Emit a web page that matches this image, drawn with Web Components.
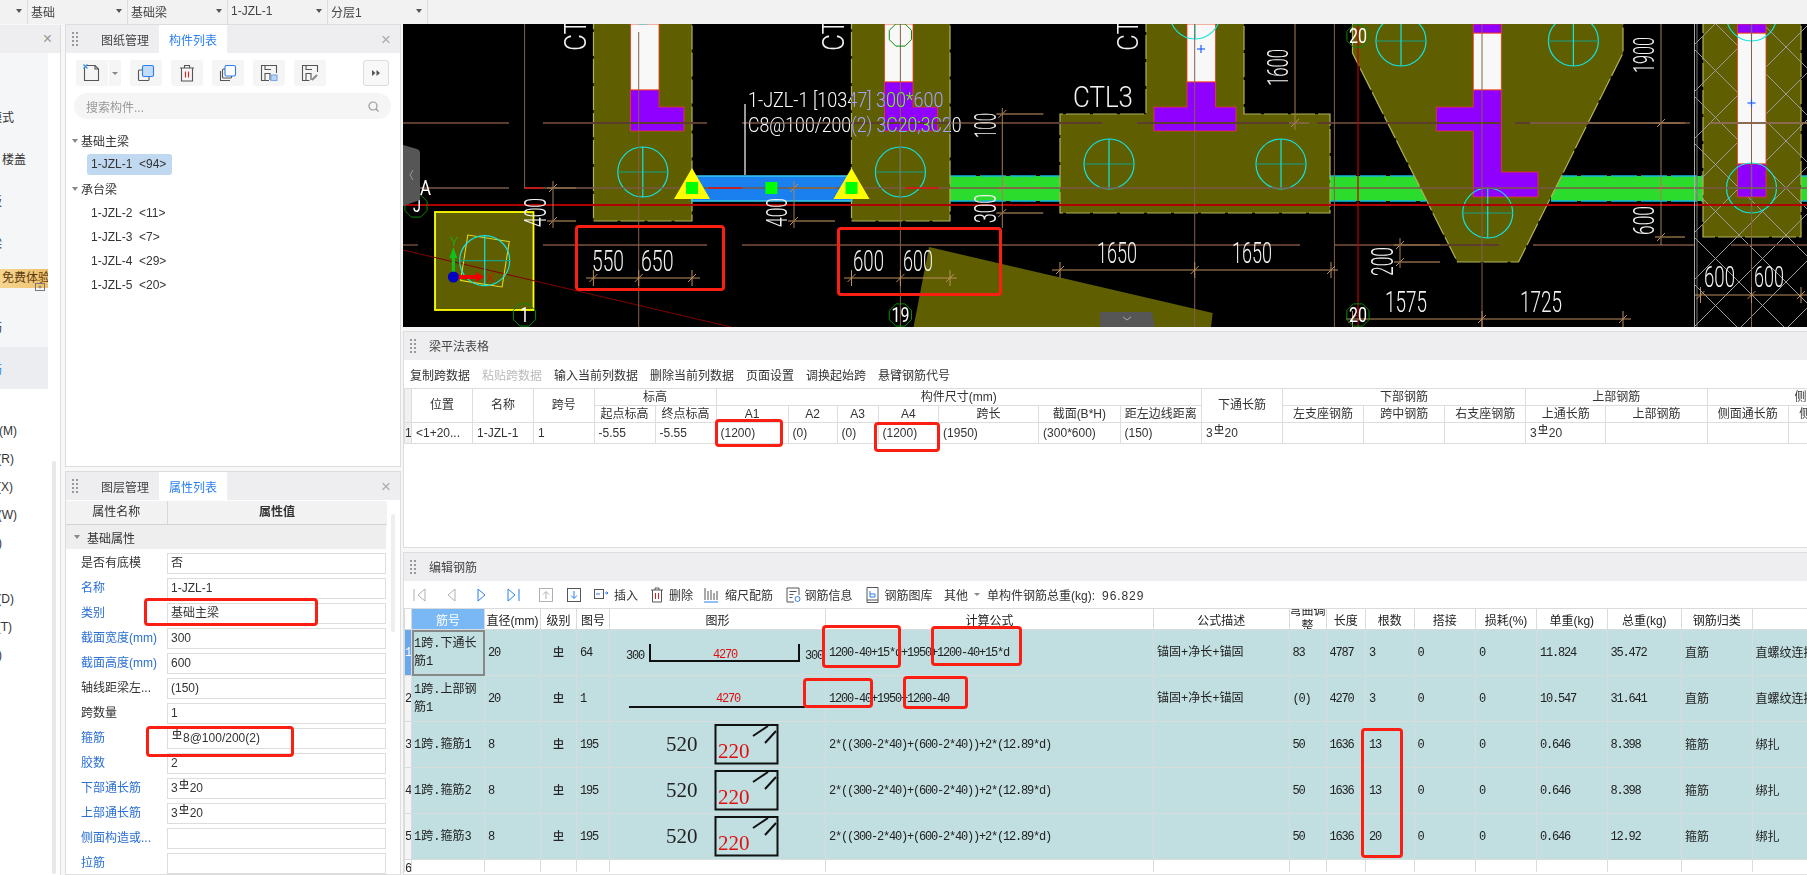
<!DOCTYPE html>
<html lang="zh-CN">
<head>
<meta charset="utf-8">
<title>编辑钢筋</title>
<style>
  html, body { margin: 0; height: 100%; overflow: hidden; background: #f7f7f7; }
  body { font: 12px "Liberation Sans", "Noto Sans CJK SC", sans-serif; color: #333; }
</style>
</head>
<body>
<app-shell>
  <top-bar slot="top"></top-bar>
  <nav-rail slot="rail"></nav-rail>
  <dock-panel slot="list" tabs="图纸管理,构件列表" active="1"><comp-list></comp-list></dock-panel>
  <dock-panel slot="props" tabs="图层管理,属性列表" active="1"><prop-list></prop-list></dock-panel>
  <cad-canvas slot="canvas"></cad-canvas>
  <dock-panel slot="beam" heading="梁平法表格"><beam-table></beam-table></dock-panel>
  <dock-panel slot="rebar" heading="编辑钢筋"><rebar-table></rebar-table></dock-panel>

  <red-mark slot="marks" x="575" y="225" w="150" h="66"></red-mark>
  <red-mark slot="marks" x="837" y="227" w="165" h="69"></red-mark>
  <red-mark slot="marks" x="144" y="598" w="174" h="28"></red-mark>
  <red-mark slot="marks" x="146" y="726" w="148" h="31"></red-mark>
  <red-mark slot="marks" x="715" y="419" w="68" h="28"></red-mark>
  <red-mark slot="marks" x="874" y="422" w="66" h="30"></red-mark>
  <red-mark slot="marks" x="822" y="625" w="79" h="43"></red-mark>
  <red-mark slot="marks" x="931" y="626" w="91" h="40"></red-mark>
  <red-mark slot="marks" x="803" y="678" w="70" h="30"></red-mark>
  <red-mark slot="marks" x="903" y="676" w="65" h="33"></red-mark>
  <red-mark slot="marks" x="1361" y="728" w="42" h="130"></red-mark>
</app-shell>

<script>
// rebar grade symbol, used all over the tables
function barMark(size, lift) {
  var s = size || 10;
  var up = lift === undefined ? 3 : lift;
  return `<svg width="${s}" height="${s + 1}" viewBox="0 0 10 11" style="vertical-align:-1px;position:relative;top:-${up}px;margin:0 1px" fill="none" stroke="currentColor" stroke-width="1"><path d="M1.5 2.5h7v3.5h-7zM5 0v9.5M.5 9.5h9"/></svg>`;
}

class AppShell extends HTMLElement {
  constructor() {
    super();
    this.attachShadow({ mode: 'open' });
    this.shadowRoot.innerHTML = `
      <style>
        :host { display: block; position: relative; width: 1807px; height: 875px; overflow: hidden; }
        .grid {
          display: grid;
          height: 875px;
          grid-template-columns: 65px 338px 1404px;
          grid-template-rows: 24px 443px 408px;
        }
        .top { grid-column: 1 / 4; }
        .rail { grid-row: 2 / 4; width: 61px; }
        .list { grid-column: 2; grid-row: 2; min-height: 0; width: 336px; }
        .props { grid-column: 2; grid-row: 3; margin-top: 4px; min-height: 0; width: 336px; }
        .right {
          grid-column: 3; grid-row: 2 / 4;
          display: grid;
          grid-template-rows: 303px 217px 323px;
          row-gap: 4px;
          min-height: 0;
        }
        .marks { position: absolute; inset: 0; pointer-events: none; }
      </style>
      <div class="grid">
        <div class="top"><slot name="top"></slot></div>
        <div class="rail"><slot name="rail"></slot></div>
        <div class="list"><slot name="list"></slot></div>
        <div class="props"><slot name="props"></slot></div>
        <div class="right">
          <slot name="canvas"></slot>
          <slot name="beam"></slot>
          <slot name="rebar"></slot>
        </div>
      </div>
      <div class="marks"><slot name="marks"></slot></div>
    `;
  }
}

class RedMark extends HTMLElement {
  constructor() {
    super();
    this.attachShadow({ mode: 'open' });
    this.shadowRoot.innerHTML = `<style>
      :host { display: block; position: absolute; box-sizing: border-box; border: 3px solid #fb1e12; border-radius: 4px; }
    </style>`;
  }
  connectedCallback() {
    this.style.left = this.getAttribute('x') + 'px';
    this.style.top = this.getAttribute('y') + 'px';
    this.style.width = this.getAttribute('w') + 'px';
    this.style.height = this.getAttribute('h') + 'px';
  }
}

class TopBar extends HTMLElement {
  constructor() {
    super();
    this.attachShadow({ mode: 'open' });
    var combo = (label, w) => `<div class="combo" style="width:${w}px"><span>${label}</span><i></i></div>`;
    this.shadowRoot.innerHTML = `
      <style>
        :host { display: block; height: 24px; background: #f2f2f2; }
        .bar { display: flex; height: 24px; }
        .combo {
          box-sizing: border-box; display: flex; align-items: center; justify-content: space-between;
          padding: 0 5px 2px 3px; border-right: 1px solid #dcdcdc; color: #444;
        }
        i { margin-left: auto; width: 0; height: 0; border: 3px solid transparent; border-top: 4px solid #555; border-bottom: 0; }
      </style>
      <div class="bar">
        ${combo('', 28)}${combo('基础', 100)}${combo('基础梁', 100)}${combo('1-JZL-1', 100)}${combo('分层1', 100)}
      </div>`;
  }
}

class NavRail extends HTMLElement {
  constructor() {
    super();
    this.attachShadow({ mode: 'open' });
    var row = (h, text, end, cls) => `<div class="row ${cls || ''}" style="height:${h}px;padding-right:${48 - end}px"><span>${text}</span></div>`;
    this.shadowRoot.innerHTML = `
      <style>
        :host { display: block; position: relative; height: 851px; background: #fff; border-right: 1px solid #ddd; box-sizing: border-box; }
        .head { display: flex; justify-content: flex-end; align-items: center; height: 28px; margin-top: 1px; padding-right: 8px; background: #eeeef0; color: #999; font-size: 16px; }
        .row { box-sizing: border-box; width: 48px; display: flex; justify-content: flex-end; align-items: center; overflow: hidden; white-space: nowrap; color: #333; }
        .group { background: #f5f6f8; width: 48px; }
        .sel { background: #ecedf1; color: #2a7ff0; }
        .pad { height: 28px; }
        .tail { margin-top: 364px; }
        .tag {
          position: absolute; left: 0; top: 244px; width: 48px; height: 19px; padding-left: 2px; box-sizing: border-box;
          background: linear-gradient(90deg, #f6d592, #efc06c); color: #5c3d10; line-height: 19px; white-space: nowrap; overflow: hidden;
        }
        .lock { position: absolute; left: 35px; top: 256px; }
        .thumb { position: absolute; left: 52px; top: 436px; bottom: 2px; width: 4px; border-radius: 2px; background: #e8e8e8; }
      </style>
      <div class="head">×</div>
      <div class="group">
        ${row(42, '')}${row(42, '模式', 14)}${row(42, '楼盖', 26)}${row(42, '板', 2)}${row(42, '梁', 2)}${row(42, '')}${row(42, '筋', 2)}
        ${row(42, '配筋', 2, 'sel')}
      </div>
      <div class="pad"></div>
      ${row(28, '(M)', 17)}${row(28, '(R)', 14)}${row(28, '(X)', 13)}${row(28, '(W)', 17)}${row(28, '(A)', 2)}${row(28, '')}${row(28, '(D)', 14)}${row(28, '(T)', 12)}${row(28, '(C)', 2)}
      <div class="group tail">
        ${row(42, '量', 2)}${row(42, '定义', 14)}
      </div>
      <div class="tag">免费体验</div>
      <svg class="lock" width="10" height="10" viewBox="0 0 10 10" fill="none" stroke="#777"><rect x=".5" y="2.5" width="9" height="7"/><circle cx="5" cy="6" r="1"/></svg>
      <div class="thumb"></div>
    `;
  }
}

class DockPanel extends HTMLElement {
  constructor() {
    super();
    this.attachShadow({ mode: 'open' });
  }
  connectedCallback() {
    var tabs = (this.getAttribute('tabs') || '').split(',').filter(Boolean);
    var active = Number(this.getAttribute('active') || 0);
    var heading = this.getAttribute('heading') || '';
    var dots = '';
    for (var i = 0; i < 4; i++) dots += `<rect x="0" y="${i * 4}" width="2" height="2"/><rect x="4" y="${i * 4}" width="2" height="2"/>`;
    var tabHtml = tabs.map((t, i) => `<div class="tab ${i === active ? 'on' : ''}">${t}</div>`).join('');
    this.shadowRoot.innerHTML = `
      <style>
        :host { display: flex; flex-direction: column; box-sizing: border-box; height: 100%; min-height: 0; background: #fff; border: 1px solid #ddd; }
        .head { flex: none; display: flex; align-items: stretch; height: 28px; background: #eeeef0; color: #444; }
        .grip { flex: none; align-self: center; fill: #999; margin: 0 0 0 6px; }
        .tab { padding: 0 10px; display: flex; align-items: center; }
        .tab:first-of-type { margin-left: 13px; }
        .on { background: #fff; color: #2a7ff0; }
        .title { margin: -2px 0 0 13px; align-self: center; }
        .x { margin-left: auto; padding-right: 9px; align-self: center; color: #aaa; font-size: 17px; line-height: 1; }
        .body { flex: 1; min-height: 0; overflow: hidden; }
      </style>
      <div class="head">
        <svg class="grip" width="6" height="14" viewBox="0 0 6 14">${dots}</svg>
        ${heading ? `<div class="title">${heading}</div>` : tabHtml + '<div class="x">×</div>'}
      </div>
      <div class="body"><slot></slot></div>`;
  }
}

class CompList extends HTMLElement {
  constructor() {
    super();
    this.attachShadow({ mode: 'open' });
    var ic = (body) => `<svg width="18" height="18" viewBox="0 0 18 18" fill="none" stroke="#555" stroke-width="1.1">${body}</svg>`;
    var icons = [
      '<path d="M1.5 4v12.5h14V5l-3.5-3.5H4"/><path d="M12 1.5V5h3.5"/><path d="M.5.5l4 4M4.5.5l-4 4" stroke="#3a86e8"/>',
      '<rect x="1.5" y="6" width="10.5" height="10.5" rx="1"/><rect x="5.5" y="1.5" width="11" height="11" rx="1.5" fill="#c4dcfb" stroke="#2a7ff0"/>',
      '<path d="M2 4h14M6.5 4V1.5h5V4M3.5 4v13h11V4"/><path d="M7.5 7.5v6M10.5 7.5v6" stroke="#e0201a"/>',
      '<path d="M1.5 7v9.5h9.5"/><rect x="3.5" y="5" width="9" height="9" rx="1"/><rect x="6" y="1.5" width="10.5" height="10.5" rx="1.5" fill="#fff" stroke="#2a7ff0"/>',
      '<path d="M16.5 9V1.5h-15v15h7.5"/><path d="M5 16V9.5h5V16M5 1.5v4h6"/><rect x="11" y="11" width="6" height="5.5" fill="#b8d6fa" stroke="#7aa8e0"/>',
      '<path d="M16.5 8V1.5h-15v15h7"/><path d="M5 16V9.5h5V16M5 1.5v4h6"/><path d="M11 16l5-5" stroke="#888" stroke-width="2"/>'
    ];
    var tree = [
      ['g', '基础主梁'], ['s', '1-JZL-1 &nbsp;&lt;94&gt;'],
      ['g', '承台梁'], ['i', '1-JZL-2 &nbsp;&lt;11&gt;'], ['i', '1-JZL-3 &nbsp;&lt;7&gt;'], ['i', '1-JZL-4 &nbsp;&lt;29&gt;'], ['i', '1-JZL-5 &nbsp;&lt;20&gt;']
    ];
    this.shadowRoot.innerHTML = `
      <style>
        :host { display: block; }
        .tools { display: flex; padding: 7px 0 0 10px; height: 26px; }
        .btn { width: 32px; height: 26px; background: #f5f5f5; border-radius: 3px; display: flex; align-items: center; justify-content: center; margin-right: 9px; }
        .btn.first { margin-right: 0; border-radius: 3px 0 0 3px; }
        .drop { width: 12px; height: 26px; margin: 0 9px 0 1px; background: #f5f5f5; border-radius: 0 3px 3px 0; display: flex; align-items: center; justify-content: center; }
        .drop i { border: 3px solid transparent; border-top: 3px solid #888; border-bottom: 0; }
        .more { box-sizing: border-box; width: 26px; height: 26px; margin-left: 28px; background: #f8f8f8; border: 1px solid #ddd; border-radius: 3px; display: flex; align-items: center; justify-content: center; }
        .search { display: flex; align-items: center; justify-content: space-between; height: 26px; margin: 7px 9px 0 8px; padding: 0 12px; background: #f5f5f5; border-radius: 13px; color: #999; }
        .tree { margin-top: 9.5px; }
        .node { height: 24px; display: flex; align-items: center; color: #333; }
        .g { padding-left: 6px; }
        .g i { width: 0; border: 3px solid transparent; border-top: 4px solid #888; border-bottom: 0; margin-right: 3px; }
        .i { padding-left: 25px; }
        .s { padding-left: 21px; }
        .s span { box-sizing: border-box; width: 85px; height: 21px; line-height: 21px; padding-left: 4px; background: #c0d8f0; border-radius: 3px; }
      </style>
      <div class="tools">
        <div class="btn first">${ic(icons[0])}</div><div class="drop"><i></i></div>
        ${icons.slice(1).map(b => `<div class="btn">${ic(b)}</div>`).join('')}
        <div class="more"><svg width="8" height="6" viewBox="0 0 8 6" fill="#555"><path d="M0 0l3.5 3L0 6zM4.500 0l3.500 3-3.500 3z"/></svg></div>
      </div>
      <div class="search"><span>搜索构件...</span>
        <svg width="11" height="11" viewBox="0 0 11 11" fill="none" stroke="#999" stroke-width="1.2"><circle cx="5" cy="5" r="4"/><path d="M8 8l2.500 2.500"/></svg></div>
      <div class="tree">
        ${tree.map(n => n[0] === 'g'
          ? `<div class="node g"><i></i>${n[1]}</div>`
          : n[0] === 's' ? `<div class="node s"><span>${n[1]}</span></div>` : `<div class="node i">${n[1]}</div>`).join('')}
      </div>`;
  }
}

class PropList extends HTMLElement {
  constructor() {
    super();
    this.attachShadow({ mode: 'open' });
    var rows = [
      ['是否有底模', '否', 0], ['名称', '1-JZL-1', 1], ['类别', '基础主梁', 1], ['截面宽度(mm)', '300', 1],
      ['截面高度(mm)', '600', 1], ['轴线距梁左...', '(150)', 0], ['跨数量', '1', 0],
      ['箍筋', barMark(10) + '8@100/200(2)', 1], ['胶数', '2', 1], ['下部通长筋', '3' + barMark(10) + '20', 1],
      ['上部通长筋', '3' + barMark(10) + '20', 1], ['侧面构造或...', '', 1], ['拉筋', '', 1]
    ];
    this.shadowRoot.innerHTML = `
      <style>
        :host { display: block; position: relative; }
        .head { display: grid; grid-template-columns: 100.500px 220px; height: 24px; margin-top: 1px; line-height: 23px; text-align: center; background: #f2f2f2; border-bottom: 1px solid #d4d4d4; width: 321px; box-sizing: border-box; }
        .head div + div { border-left: 1px solid #d8d8d8; font-weight: bold; }
        .group { display: flex; align-items: center; height: 24px; padding-left: 8px; width: 320px; box-sizing: border-box; background: #eeeeee; }
        .group i { border: 3px solid transparent; border-top: 4px solid #888; border-bottom: 0; margin-right: 7px; }
        .list { padding-top: 4px; }
        .row { display: grid; grid-template-columns: 101px 219px; height: 25px; align-items: start; }
        .name { padding-left: 15px; line-height: 21px; white-space: nowrap; }
        .name.key { color: #2a6fd6; }
        .val { box-sizing: border-box; height: 21px; border: 1px solid #ddd; padding-left: 3px; line-height: 19px; white-space: nowrap; }
        .thumb { position: absolute; left: 325px; top: 13px; width: 4px; height: 118px; border-radius: 2px; background: #eee; }
      </style>
      <div class="head"><div>属性名称</div><div>属性值</div></div>
      <div class="group"><i></i>基础属性</div>
      <div class="list">
        ${rows.map(r => `<div class="row"><div class="name ${r[2] ? 'key' : ''}">${r[0]}</div><div class="val">${r[1]}</div></div>`).join('')}
      </div>
      <div class="thumb"></div>`;
  }
}

class CadCanvas extends HTMLElement {
  constructor() {
    super();
    this.attachShadow({ mode: 'open' });
  }

  connectedCallback() { this.render(); }

  _line(x1, y1, x2, y2, color, w, dash) {
    return `<line x1="${x1}" y1="${y1}" x2="${x2}" y2="${y2}" stroke="${color}" stroke-width="${w || 1}"${dash ? ` stroke-dasharray="${dash}"` : ''}/>`;
  }

  // horizontal CAD number, given by its box: baseline y, left x, width, cap height
  _num(x, y, w, h, str, fill) {
    var heavy = fill === '#fff' ? ' style="font-weight:400"' : '';
    return `<text x="${x}" y="${y}" font-size="${h / 0.72}" textLength="${w}" lengthAdjust="spacingAndGlyphs" fill="${fill || '#f2f2f2'}"${heavy}>${str}</text>`;
  }

  // number reading upwards, given by its box
  _up(x0, x1, y0, y1, str) {
    return `<text transform="translate(${x1} ${y1}) rotate(-90)" font-size="${(x1 - x0) / 0.72}" textLength="${y1 - y0}" lengthAdjust="spacingAndGlyphs" fill="#f2f2f2">${str}</text>`;
  }

  _pile(cx, cy) {
    var r = 25;
    return `<circle cx="${cx}" cy="${cy}" r="${r}" fill="none" stroke="#12e4e4" stroke-width="1.2"/>` +
      this._line(cx - r, cy, cx + r, cy, '#16a08c', 1.2) + this._line(cx, cy - r, cx, cy + r, '#12e4e4', 1.2);
  }

  _axisMark(cx, cy, label) {
    var r = 12, pts = [];
    for (var i = 0; i < 8; i++) pts.push((cx + r * Math.cos(i * Math.PI / 4 + .39)).toFixed(1) + ',' + (cy + r * Math.sin(i * Math.PI / 4 + .39)).toFixed(1));
    return `<polygon points="${pts.join(' ')}" fill="none" stroke="#0a8a0a"/>` + (label ? this._num(cx - label.length * 4.5, cy + 7, label.length * 9, 14, label, '#fff') : '');
  }

  // dimension line with oblique ticks
  _dimH(x1, x2, y, ticks) {
    var s = this._line(x1, y, x2, y, '#bb8f5e');
    ticks.forEach(t => {
      s += this._line(t - 4, y + 4, t + 4, y - 4, '#bb8f5e') + this._line(t, y - 8, t, y + 8, '#bb8f5e');
    });
    return s;
  }

  _dimV(x, y1, y2, ticks, reach) {
    var s = this._line(x, y1, x, y2, '#a57f56');
    ticks.forEach(t => {
      s += this._line(x - 4, t + 4, x + 4, t - 4, '#bb8f5e') + this._line(x - 6, t, x + (reach || 12), t, '#8a6a48', 1.5);
    });
    return s;
  }

  render() {
    var OLIVE = '#5f5e00', EDGE = '#b2b25a', PURPLE = '#8f00ff', RED = '#f03c14', AXIS = '#5c3d2e';
    var s = '';

    // beams below everything
    [[950, 1060], [1330, 1426], [1551, 1703], [1800, 1807]].forEach(b => {
      s += `<rect x="${b[0]}" y="176" width="${b[1] - b[0]}" height="25" fill="#2cdc2c"/>`;
      s += this._line(b[0], 176, b[1], 176, '#12b8e0', 1.5, '26 4') + this._line(b[0], 201, b[1], 201, '#12b8e0', 1.5, '26 4');
    });

    // caps
    var caps = [
      '593.500,16 692,16 692,221 593.500,221',
      '851.500,16 950,16 950,221 851.500,221',
      '1146,16 1244,16 1244,114 1330,114 1330,213 1060,213 1060,114 1146,114',
      '1352.500,16 1352.500,53 1457.500,262 1518.500,262 1623,53 1623,16',
      '1703,16 1801,16 1801,237 1703,237'
    ];
    caps.forEach(p => { s += `<polygon points="${p}" fill="${OLIVE}" stroke="${EDGE}" stroke-width="1.2" stroke-dasharray="24 3"/>`; });
    s += `<polygon points="929,247 1212.700,313 1210,335 912,335" fill="${OLIVE}"/>`;
    s += `<rect x="435" y="212" width="98.500" height="98" fill="${OLIVE}" stroke="#ffff00" stroke-width="1.800"/>`;

    // crossed hatch over the right hand cap
    s += `<rect x="1695" y="24" width="112" height="303" fill="url(#hatch)"/>`;

    // columns
    var white = [[630.500, 24, 28.500, 66], [884.500, 24, 28.500, 58], [1187, 24, 28.500, 58], [1473.300, 33, 28, 57], [1737.500, 33, 28.500, 131]];
    white.forEach(r => { s += `<rect x="${r[0]}" y="${r[1]}" width="${r[2]}" height="${r[3]}" fill="#f8f8f8" stroke="${RED}" stroke-width=".8"/>`; });
    var purple = [
      '630.500,90 659,90 659,107 684,107 684,131 630.500,131',
      '884.500,82 913,82 913,107 937.500,107 937.500,131 884.500,131',
      '1187,82 1215.500,82 1215.500,107 1236,107 1236,131 1154,131 1154,107 1187,107',
      '1473.300,90 1501.300,90 1501.300,172 1538,172 1538,197 1473.300,197 1473.300,131 1436.300,131 1436.300,107 1473.300,107',
      '1473.300,24 1501.300,24 1501.300,33 1473.300,33',
      '1737.500,164 1766,164 1766,197 1737.500,197',
      '1737.500,24 1766,24 1766,33 1737.500,33'
    ];
    purple.forEach(p => { s += `<polygon points="${p}" fill="${PURPLE}" stroke="${RED}" stroke-width=".8"/>`; });

    // the picked beam
    s += `<rect x="692" y="176" width="159.500" height="25" fill="#1a80f0" stroke="#38c8f0" stroke-width="1.500"/>`;

    // piles
    [[642.800, 172], [900.400, 172], [1109, 164], [1281, 164], [1401, 41], [1573.400, 41], [1487.700, 213], [1751.500, 188], [1195, 14], [1751.500, 16], [642.800, -1]]
      .forEach(c => { s += this._pile(c[0], c[1]); });

    // grid axes
    [[403, 509], [543, 707], [742, 1102], [1137, 1300], [1317, 1500], [1515, 1690]].forEach(a => { s += this._line(a[0], 123, a[1], 123, AXIS, 1.800); });
    s += this._line(1530, 123, 1680, 123, '#7a5a40', 1.800) + this._line(1710, 123, 1807, 123, '#8a6a50', 1.800);
    [[403, 509], [524, 1807]].forEach(a => { s += this._line(a[0], 188, a[1], 188, '#7a5a48', 1.500); });
    s += this._line(524.600, 188, 543, 188, '#e01010', 1.500) + this._line(708, 188, 742, 188, '#e01010', 1.500) + this._line(905, 188, 939, 188, '#e01010', 1.500);
    [[403, 418], [543, 707], [742, 1300], [1334, 1499], [1533, 1695], [1731, 1807]].forEach(a => { s += this._line(a[0], 245, a[1], 245, AXIS, 1.800); });
    s += this._line(403, 205, 1807, 205, '#b00000', 2);
    s += this._line(403, 250, 731, 327, '#800000');
    s += this._line(1358, 24, 1358, 327, '#c00000', 1.200);
    [[524.600, 24, 188], [638.700, 32, 327], [900.400, 24, 327], [1194.700, 24, 327], [1334.400, 24, 327], [1482, 24, 327], [1751.500, 24, 327]].forEach(l => {
      s += this._line(l[0], l[1], l[0], l[2], '#86604a');
    });
    s += this._line(1694.500, 24, 1694.500, 327, '#aaa') + this._line(1697, 24, 1697, 327, '#777');

    // dimensions
    s += this._dimH(586, 700, 278, [593.400, 638.700, 692]);
    s += this._dimH(844, 957, 278, [851.500, 900.400, 950]);
    s += this._dimH(1052, 1338, 270, [1060, 1194.700, 1331]);
    s += this._dimH(1346, 1631, 319, [1352.500, 1482, 1623]);
    s += this._dimH(1695, 1807, 295, [1700.500, 1751.500, 1801]);
    s += this._dimV(553, 181, 228, [188, 221], 23);
    s += this._dimV(794, 181, 228, [188, 221], 41);
    s += this._dimV(1002.300, 108, 228, [114, 188, 213], 41);
    s += this._dimV(1295, 24, 130, [123], 14);
    s += this._dimV(1661, 24, 245, [123, 188, 237], 24);
    s += this._dimV(1400, 238, 268, [245, 262], 40);

    // numbers
    s += this._num(592, 271, 32, 21, '550') + this._num(641, 271, 32.500, 21, '650');
    s += this._num(853, 271, 31, 21, '600') + this._num(903, 271, 30, 21, '600');
    s += this._num(1097, 263, 40, 21, '1650') + this._num(1232, 263, 40, 21, '1650');
    s += this._num(1385, 312, 42, 21, '1575') + this._num(1520, 312, 42, 21, '1725');
    s += this._num(1704, 287, 31, 21, '600') + this._num(1754, 287, 30, 21, '600');
    s += this._num(1073, 107, 60, 21, 'CTL3');
    s += this._up(523, 546, 198, 227, '400') + this._up(766, 787, 198, 227, '400');
    s += this._up(974, 996, 113, 138, '100') + this._up(974, 996, 194, 223, '300');
    s += this._up(1267, 1288, 49, 86, '1600') + this._up(1633, 1654, 37, 73, '1900');
    s += this._up(1633, 1654, 206, 235, '600') + this._up(1371, 1393, 247, 276, '200');
    s += this._up(564, 586, -9, 51, 'CTL3') + this._up(822, 844, -9, 51, 'CTL3') + this._up(1117, 1138, -9, 51, 'CTL3');

    // axis bubbles
    s += this._axisMark(416, 206) + this._num(413, 212, 8, 14, 'J', '#fff') + this._num(420, 195, 11, 14, 'A', '#fff');
    s += this._axisMark(524.500, 315, '1') + this._axisMark(900.400, 315, '19') + this._axisMark(1358, 315, '20') + this._axisMark(1358, 36, '20');
    s += this._axisMark(900.400, 35);

    // blue plus marks
    [[1201, 49], [1751.500, 103]].forEach(p => { s += this._line(p[0] - 4, p[1], p[0] + 4, p[1], '#2060ff', 1.200) + this._line(p[0], p[1] - 4, p[0], p[1] + 4, '#2060ff', 1.200); });

    // supports and grips of the picked beam
    s += `<polygon points="692,168 674,199 710,199" fill="#ffff00"/><polygon points="851.500,168 833.500,199 869.500,199" fill="#ffff00"/>`;
    [692, 771.400, 851.500].forEach(x => { s += `<rect x="${x - 6}" y="182" width="12" height="12" fill="#00ff00"/>`; });
    s += this._line(745, 104, 745, 175, '#fff', 1.200);

    // coordinate gizmo
    s += `<g transform="rotate(9 484.700 260.700)"><rect x="464" y="238" width="42" height="46" fill="none" stroke="#f0e020"/></g>`;
    s += this._pile(484.700, 260.700);
    s += `<polygon points="453.400,247 449.500,258 451.800,258 451.800,277 455,277 455,258 457.300,258" fill="#10c020"/>`;
    s += `<rect x="453" y="275" width="26" height="4" fill="#f00000"/><polygon points="484,277 476,272 476,282" fill="#f00000"/>`;
    s += `<circle cx="453.400" cy="277" r="5.500" fill="#0000c0"/>`;
    s += this._num(450, 246, 8, 9, 'Y', '#10c020') + this._num(486, 282, 8, 9, 'X', '#f00000');

    // the grey collapse tabs
    s += `<path d="M403 145l14 4q3 1 3 4v47l-17 6z" fill="#565656"/><path d="M413 170l-3 5 3 5" fill="none" stroke="#999"/>`;
    s += `<path d="M1100 327v-15h52l3 15z" fill="#565656"/><path d="M1123 317l4 3 4-3" fill="none" stroke="#aaa"/>`;

    this.shadowRoot.innerHTML = `
      <style>
        :host { display: block; height: 303px; background: #000; overflow: hidden; }
        svg { display: block; }
        text { font-family: Roboto, Lato, "Liberation Sans", sans-serif; font-weight: 300; }
        .pick { mix-blend-mode: difference; }
      </style>
      <svg width="1404" height="303" viewBox="403 24 1404 303">
        <defs>
          <pattern id="hatch" width="47" height="47" patternUnits="userSpaceOnUse">
            <path d="M0 0L47 47M47 0L0 47" stroke="#9c9c9c" stroke-width="1" fill="none"/>
          </pattern>
        </defs>
        ${s}
        <text class="pick" x="748" y="107" font-size="20" textLength="195.500" lengthAdjust="spacingAndGlyphs" fill="#fff">1-JZL-1 [10347] 300*600</text>
        <text class="pick" x="748" y="132" font-size="20" textLength="213.500" lengthAdjust="spacingAndGlyphs" fill="#fff">C8@100/200(2) 3C20;3C20</text>
      </svg>`;
  }
}

class BeamTable extends HTMLElement {
  constructor() {
    super();
    this.attachShadow({ mode: 'open' });
    var widths = [7, 61, 61, 60.5, 61, 61, 72, 49, 41, 60.6, 100, 81.4, 81.4, 81.2, 81.1, 81.3, 80.6, 80.4, 101, 81.5, 81.5, 60];
    var total = widths.reduce((a, b) => a + b, 0);
    var bar3 = '3' + barMark(10) + '20';
    var cells = ['&lt;1+20...', '1-JZL-1', '1', '-5.55', '-5.55', '(1200)', '(0)', '(0)', '(1200)', '(1950)', '(300*600)', '(150)', bar3, '', '', '', bar3, '', '', '', ''];
    var tools = ['复制跨数据', '粘贴跨数据', '输入当前列数据', '删除当前列数据', '页面设置', '调换起始跨', '悬臂钢筋代号'];
    this.shadowRoot.innerHTML = `
      <style>
        :host { display: block; }
        .tools { display: flex; gap: 12px; height: 28px; align-items: center; padding-left: 6px; color: #333; white-space: nowrap; }
        .off { color: #bbb; }
        .wrap { overflow: hidden; }
        table { border-collapse: collapse; table-layout: fixed; width: ${total}px; }
        td { border: 1px solid #ddd; padding: 0; text-align: center; white-space: nowrap; overflow: hidden; color: #333; line-height: 15px; }
        .h1 td { height: 16px; }
        .h2 td { height: 16px; }
        .d td { height: 20px; text-align: left; padding-left: 4px; }
        .d td.no { padding: 0; text-align: center; background: #f0f0f0; }
        td.blank { background: #f0f0f0; }
      </style>
      <div class="tools">${tools.map((t, i) => `<span class="${i === 1 ? 'off' : ''}">${t}</span>`).join('')}</div>
      <div class="wrap">
        <table>
          <colgroup>${widths.map(w => `<col style="width:${w}px">`).join('')}</colgroup>
          <tr class="h1">
            <td rowspan="2" class="blank"></td><td rowspan="2">位置</td><td rowspan="2">名称</td><td rowspan="2">跨号</td>
            <td colspan="2">标高</td><td colspan="7">构件尺寸(mm)</td><td rowspan="2">下通长筋</td>
            <td colspan="3">下部钢筋</td><td colspan="2">上部钢筋</td><td colspan="3">侧面钢筋</td>
          </tr>
          <tr class="h2">
            <td>起点标高</td><td>终点标高</td><td>A1</td><td>A2</td><td>A3</td><td>A4</td><td>跨长</td><td>截面(B*H)</td><td>距左边线距离</td>
            <td>左支座钢筋</td><td>跨中钢筋</td><td>右支座钢筋</td><td>上通长筋</td><td>上部钢筋</td><td>侧面通长筋</td><td>侧面受扭筋</td><td></td>
          </tr>
          <tr class="d"><td class="no">1</td>${cells.map(c => `<td>${c}</td>`).join('')}</tr>
        </table>
      </div>`;
  }
}

class RebarTable extends HTMLElement {
  constructor() {
    super();
    this.attachShadow({ mode: 'open' });
  }

  connectedCallback() { this.render(); }

  // half width runs in the mono face, the way the grid of the app draws them
  _mono(text) {
    return String(text).replace(/[\x20-\x7e]+/g, m => `<span class="a">${m}</span>`);
  }

  _shape(kind) {
    var base = `<svg width="216" height="45" viewBox="0 0 216 45" style="display:block">`;
    var ty = `font-family="Liberation Mono, monospace" font-size="12"`;
    if (kind === 'u') {
      return base + `<text x="16" y="29" ${ty} letter-spacing="-1.200" fill="#222">300</text>
        <path d="M40 14v17h149v-17" fill="none" stroke="#111" stroke-width="2"/>
        <text x="103" y="28" ${ty} letter-spacing="-1.200" fill="#e01010">4270</text>
        <text x="195" y="29" ${ty} letter-spacing="-1.200" fill="#222">300</text></svg>`;
    }
    if (kind === 'line') {
      return base + `<text x="106" y="26" ${ty} letter-spacing="-1.200" fill="#e01010">4270</text>
        <path d="M19 31h176" stroke="#111" stroke-width="2"/></svg>`;
    }
    return base + `<text x="56" y="29" font-family="Liberation Serif, serif" font-size="21" fill="#222">520</text>
      <rect x="105.500" y="3" width="62" height="38.500" fill="none" stroke="#111" stroke-width="2"/>
      <text x="108" y="36" font-family="Liberation Serif, serif" font-size="21" fill="#e01010">220</text>
      <path d="M158 4l-15 10M166 9l-11 12" stroke="#111" stroke-width="2" fill="none"/></svg>`;
  }

  render() {
    var widths = [7, 73, 56, 36, 33, 216, 328, 135.500, 37, 39.500, 48.500, 61.500, 61, 70.500, 74.500, 70.500, 80];
    var total = widths.reduce((a, b) => a + b, 0);
    var heads = ['筋号', '直径(mm)', '级别', '图号', '图形', '计算公式', '公式描述', '弯曲调整', '长度', '根数', '搭接', '损耗(%)', '单重(kg)', '总重(kg)', '钢筋归类', ''];
    var loop = '2*((300-2*40)+(600-2*40))+2*(12.89*d)';
    var rows = [
      ['1跨.下通长筋1', '20', '64', 'u', '1200-40+15*d+1950+1200-40+15*d', '锚固+净长+锚固', '83', '4787', '3', '11.824', '35.472', '直筋', '直螺纹连接'],
      ['1跨. 上部钢筋1', '20', '1', 'line', '1200-40+1950+1200-40', '锚固+净长+锚固', '(0)', '4270', '3', '10.547', '31.641', '直筋', '直螺纹连接'],
      ['1跨. 箍筋1', '8', '195', 'box', loop, '', '50', '1636', '13', '0.646', '8.398', '箍筋', '绑扎'],
      ['1跨. 箍筋2', '8', '195', 'box', loop, '', '50', '1636', '13', '0.646', '8.398', '箍筋', '绑扎'],
      ['1跨. 箍筋3', '8', '195', 'box', loop, '', '50', '1636', '20', '0.646', '12.92', '箍筋', '绑扎']
    ];
    var m = v => `<div class="c">${this._mono(v)}</div>`;
    var body = rows.map((r, i) => `<tr class="row">
        <td class="no ${i === 0 ? 'cur' : ''}"><span class="a">${i + 1}</span></td>
        <td class="${i === 0 ? 'sel' : ''}"><div class="c name">${this._mono(r[0])}</div></td>
        <td>${m(r[1])}</td><td><div class="c mid">${barMark(11, 0)}</div></td><td>${m(r[2])}</td>
        <td class="fig">${this._shape(r[3])}</td>
        <td>${m(r[4])}</td><td>${m(r[5])}</td><td>${m(r[6])}</td><td>${m(r[7])}</td><td>${m(r[8])}</td>
        <td>${m('0')}</td><td>${m('0')}</td><td>${m(r[9])}</td><td>${m(r[10])}</td><td>${m(r[11])}</td><td>${m(r[12])}</td>
      </tr>`).join('');
    var blank = '<tr class="row empty"><td class="no"><span class="a">6</span></td>' + widths.slice(1).map(() => '<td></td>').join('') + '</tr>';

    var ic = (w, body) => `<svg class="ic" width="${w}" height="18" viewBox="0 0 ${w} 18" fill="none" stroke="#555">${body}</svg>`;
    var G = '#b0b0b0', B = '#2a7ff0';
    this.shadowRoot.innerHTML = `
      <style>
        :host { display: block; }
        .tools { display: flex; align-items: center; height: 27px; padding-left: 7px; white-space: nowrap; color: #333; }
        .ic { flex: none; display: block; }
        .wrap { overflow: hidden; height: 264px; }
        table { border-collapse: collapse; table-layout: fixed; width: ${total}px; }
        td { border: 1px solid #d8dcdc; padding: 0; overflow: hidden; color: #222; }
        .head td { height: 20px; text-align: center; background: #fff; white-space: nowrap; }
        .head .key { background: #7ab8f5; color: #fff; }
        .head .bend { white-space: normal; }
        .head .bend div { height: 20px; display: flex; align-items: center; justify-content: center; line-height: 15px; overflow: hidden; }
        .row td { height: 45px; background: #c1dee0; }
        .row .c { padding-left: 3px; line-height: 16px; max-height: 44px; overflow: hidden; }
        .row .mid { padding: 0; text-align: center; }
        .row .name { padding-left: 2px; line-height: 17px; }
        .row .name .a { word-spacing: -6px; }
        .row .no { background: #f4f4f4; text-align: center; }
        .row .cur { background: #6aa8ee; color: #fff; }
        .row .cur .a { color: #fff; }
        .row .sel { outline: 2px solid #888; outline-offset: -2px; }
        .row .fig { padding: 0; }
        .row.empty td { background: #fff; height: 16px; }
        .a { font-family: "Liberation Mono", monospace; letter-spacing: -1.2px; padding-right: 1.2px; }
        .total b { font-weight: normal; letter-spacing: .9px; margin-left: 7px; }
      </style>
      <div class="tools">
        ${ic(16, `<path d="M3 3v12M14 3L7 9l7 6z" stroke="${G}"/>`)}
        <span style="margin-left:16px"></span>${ic(16, `<path d="M12 3L5 9l7 6z" stroke="${G}"/>`)}
        <span style="margin-left:15px"></span>${ic(16, `<path d="M4 3l7 6-7 6z" stroke="${B}"/>`)}
        <span style="margin-left:16px"></span>${ic(16, `<path d="M2 3l7 6-7 6zM13 3v12" stroke="${B}"/>`)}
        <span style="margin-left:16px"></span>${ic(16, `<rect x="1.500" y="2.500" width="13" height="13" stroke="${G}"/><path d="M8 13V6M5 8.500L8 5.500l3 3" stroke="${G}"/>`)}
        <span style="margin-left:12px"></span>${ic(16, `<rect x="1.500" y="2.500" width="13" height="13"/><path d="M8 5v7M5 9.500l3 3 3-3" stroke="${B}"/>`)}
        <span style="margin-left:11px"></span>${ic(16, `<rect x="1.500" y="3.500" width="9" height="9"/><path d="M3 8h4M12 7h3M13.500 5.500l1.500 1.500-1.500 1.500" stroke="${B}"/>`)}
        <span style="margin-left:5px">插入</span>
        <span style="margin-left:11px"></span>${ic(16, `<path d="M2 4h12M6 4V2h4v2M3.500 4v12h9V4"/><path d="M6.500 7v6M9.500 7v6" stroke="#e0201a"/>`)}
        <span style="margin-left:4px">删除</span>
        <span style="margin-left:10px"></span>${ic(16, `<path d="M2 2v12M5 5v9M8 4v10M11 7v7M14 5v9" stroke="#555"/><path d="M1 16h14" stroke="${B}"/>`)}
        <span style="margin-left:6px">缩尺配筋</span>
        <span style="margin-left:12px"></span>${ic(16, `<path d="M14 9V2H2v14h7"/><path d="M4.500 5.500h7M4.500 8.500h4M4.500 11.500h3" stroke="#555"/><circle cx="12.500" cy="13" r="2.500" stroke="${B}"/>`)}
        <span style="margin-left:3.5px">钢筋信息</span>
        <span style="margin-left:11px"></span>${ic(16, `<path d="M3 1.500h11v15H3zM3 14h11"/><path d="M6 5v6h5V8H6" stroke="${B}"/>`)}
        <span style="margin-left:5px">钢筋图库</span>
        <span style="margin-left:11.500px">其他</span>
        <svg class="ic" style="margin-left:6px" width="6" height="4" viewBox="0 0 6 4" fill="#888"><path d="M0 0h6L3 3z"/></svg>
        <span class="total" style="margin-left:7px">单构件钢筋总重(kg):<b>96.829</b></span>
      </div>
      <div class="wrap">
        <table>
          <colgroup>${widths.map(w => `<col style="width:${w}px">`).join('')}</colgroup>
          <tr class="head"><td></td>${heads.map((h, i) => `<td class="${i === 0 ? 'key' : ''} ${i === 7 ? 'bend' : ''}">${i === 7 ? `<div>${h}</div>` : h}</td>`).join('')}</tr>
          ${body}
          ${blank}
        </table>
      </div>`;
  }
}

customElements.define('app-shell', AppShell);
customElements.define('red-mark', RedMark);
customElements.define('top-bar', TopBar);
customElements.define('nav-rail', NavRail);
customElements.define('dock-panel', DockPanel);
customElements.define('comp-list', CompList);
customElements.define('prop-list', PropList);
customElements.define('cad-canvas', CadCanvas);
customElements.define('beam-table', BeamTable);
customElements.define('rebar-table', RebarTable);
</script>
</body>
</html>
